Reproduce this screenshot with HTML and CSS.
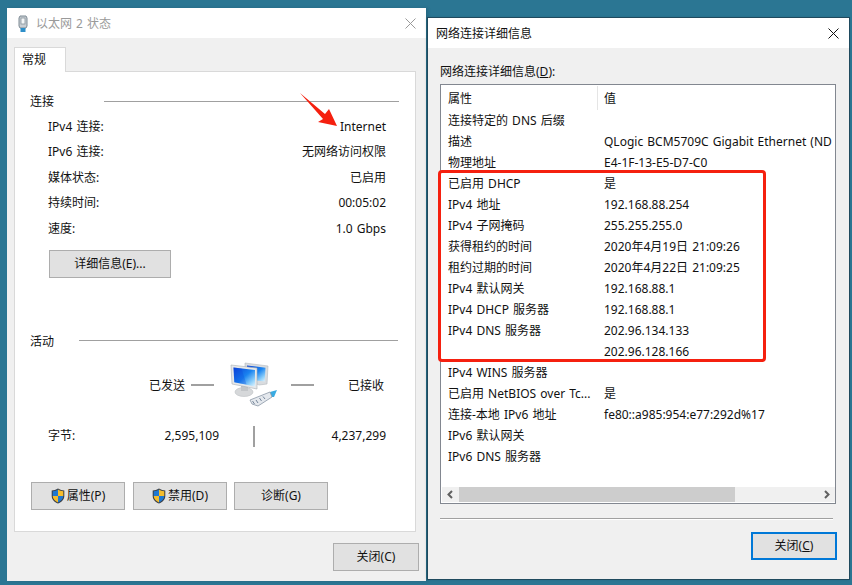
FILE: index.html
```html
<!DOCTYPE html>
<html lang="zh-CN">
<head>
<meta charset="utf-8">
<title>网络连接详细信息</title>
<link rel="stylesheet" href="styles.css">
</head>
<body>
<svg class="defs" width="0" height="0" aria-hidden="true">
  <defs>
    <symbol id="shield" viewBox="0 0 14 16">
      <path d="M7 .5C5 1.8 3 2.3 .7 2.4V8c0 3.6 2.6 6 6.3 7.6 3.700-1.600 6.300-4 6.300-7.600V2.400C11 2.300 9 1.800 7 .5Z" fill="#3b3f46"/>
      <path d="M7 1.600V8H1.700V3.300C3.700 3.200 5.400 2.700 7 1.600Z" fill="#1f78d1"/>
      <path d="M7 1.600C8.600 2.700 10.300 3.200 12.300 3.300V8H7Z" fill="#f5bd2c"/>
      <path d="M1.700 8H7v6.400C3.900 13 1.800 11 1.700 8Z" fill="#f5bd2c"/>
      <path d="M7 8h5.300c-.1 3-2.200 5-5.300 6.400Z" fill="#1f78d1"/>
    </symbol>
    <linearGradient id="scr" x1="0" y1="0" x2="1" y2="1">
      <stop offset="0" stop-color="#0a3fd8"/>
      <stop offset=".5" stop-color="#1a84f0"/>
      <stop offset=".8" stop-color="#8fd0fa"/>
      <stop offset="1" stop-color="#e4f5fe"/>
    </linearGradient>
  </defs>
</svg>

<section class="window win-status">
  <header class="titlebar">
    <svg class="plug" viewBox="0 0 10 17" aria-hidden="true">
      <path d="M2 1h6l1 2v8l-1 2H2L1 11V3Z" fill="#c9ced3" stroke="#7d8a94"/>
      <rect x="3" y="3" width="4" height="6" fill="#f4f6f7" stroke="#87939c" stroke-width=".8"/>
      <rect x="2.500" y="13" width="5" height="4" fill="#2e8fc9"/>
    </svg>
    <span class="title title-dim">以太网 2 状态</span>
    <svg class="close close-dim" viewBox="0 0 11 11" aria-hidden="true"><path d="M.5.500l10 10M10.500.500l-10 10"/></svg>
  </header>
  <div class="win-body">
    <div class="tabs"><span class="tab">常规</span></div>
    <div class="panel">
      <div class="group-head"><span class="txt">连接</span><i class="rule rule-conn"></i></div>
      <dl class="rows">
        <div class="row"><dt>IPv4 连接:</dt><dd>Internet</dd></div>
        <div class="row"><dt>IPv6 连接:</dt><dd>无网络访问权限</dd></div>
        <div class="row"><dt>媒体状态:</dt><dd>已启用</dd></div>
        <div class="row"><dt>持续时间:</dt><dd>00:05:02</dd></div>
        <div class="row"><dt>速度:</dt><dd>1.0 Gbps</dd></div>
      </dl>
      <button class="btn btn-detail">详细信息(E)...</button>
      <div class="group-head group-activity"><span class="txt">活动</span><i class="rule rule-act"></i></div>
      <div class="traffic">
        <span class="t-label txt">已发送</span>
        <i class="dash"></i>
        <svg class="net" viewBox="0 0 48 46" aria-hidden="true">
          <path d="M15 1l23 3-1 18-8 1-14-6Z" fill="#d9dcdf" stroke="#b3b8bd" stroke-width=".6"/>
          <path d="M17 3.500l18.500 2.300-.8 13.700-17.700-2Z" fill="url(#scr)"/>
          <ellipse cx="14" cy="30" rx="9" ry="4.500" fill="#d6d8da" stroke="#bcbfc2" stroke-width=".6"/>
          <path d="M11 24h7v5h-7Z" fill="#c3c6c9"/>
          <path d="M1 3l26 3v21L2 22Z" fill="#e6e8ea" stroke="#a8aeb4" stroke-width=".6"/>
          <path d="M3.500 5.500l21.500 2.500v16.500L4.300 20.300Z" fill="url(#scr)"/>
          <path d="M3.500 5.500l8 .9 5 16.200-12.200-2.300Z" fill="#0d49dc" opacity=".3"/>
          <path d="M40 30l7-2-3 7-4 0Z" fill="#39abe2"/>
          <path d="M20 38l20-8 2 5-14 9-6-2Z" fill="#e4e8ed" stroke="#8a97a6" stroke-width=".8"/>
          <path d="M22.500 39l2 3M26 38l2 3M29.500 36l2 3M33 34.500l2 2.500" stroke="#76869a" stroke-width="1" fill="none"/>
        </svg>
        <i class="dash dash-right"></i>
        <span class="t-label t-recv txt">已接收</span>
      </div>
      <div class="bytes">
        <span class="b-label">字节:</span>
        <span class="b-sent">2,595,109</span>
        <i class="b-bar"></i>
        <span class="b-recv">4,237,299</span>
      </div>
      <div class="actions">
        <button class="btn btn-act"><svg class="shield"><use href="#shield"/></svg>属性(P)</button>
        <button class="btn btn-act"><svg class="shield"><use href="#shield"/></svg>禁用(D)</button>
        <button class="btn btn-act btn-tight">诊断(G)</button>
      </div>
    </div>
    <div class="foot"><button class="btn btn-close">关闭(C)</button></div>
  </div>
</section>

<section class="window win-detail">
  <header class="titlebar">
    <span class="title title-detail">网络连接详细信息</span>
    <svg class="close" viewBox="0 0 11 11" aria-hidden="true"><path d="M.5.500l10 10M10.500.500l-10 10"/></svg>
  </header>
  <div class="detail-body">
    <div class="list-label">网络连接详细信息(<u>D</u>):</div>
    <div class="listbox">
      <div class="list-head"><span class="lh-a">属性</span><span class="lh-b">值</span></div>
      <div class="list-rows">
        <div class="lrow"><span>连接特定的 DNS 后缀</span><span></span></div>
        <div class="lrow"><span>描述</span><span>QLogic BCM5709C Gigabit Ethernet (ND</span></div>
        <div class="lrow"><span>物理地址</span><span>E4-1F-13-E5-D7-C0</span></div>
        <div class="lrow"><span>已启用 DHCP</span><span>是</span></div>
        <div class="lrow"><span>IPv4 地址</span><span>192.168.88.254</span></div>
        <div class="lrow"><span>IPv4 子网掩码</span><span>255.255.255.0</span></div>
        <div class="lrow"><span>获得租约的时间</span><span>2020年4月19日 21:09:26</span></div>
        <div class="lrow"><span>租约过期的时间</span><span>2020年4月22日 21:09:25</span></div>
        <div class="lrow"><span>IPv4 默认网关</span><span>192.168.88.1</span></div>
        <div class="lrow"><span>IPv4 DHCP 服务器</span><span>192.168.88.1</span></div>
        <div class="lrow"><span>IPv4 DNS 服务器</span><span>202.96.134.133</span></div>
        <div class="lrow"><span></span><span>202.96.128.166</span></div>
        <div class="lrow"><span>IPv4 WINS 服务器</span><span></span></div>
        <div class="lrow"><span>已启用 NetBIOS over Tc...</span><span>是</span></div>
        <div class="lrow"><span>连接-本地 IPv6 地址</span><span>fe80::a985:954:e77:292d%17</span></div>
        <div class="lrow"><span>IPv6 默认网关</span><span></span></div>
        <div class="lrow"><span>IPv6 DNS 服务器</span><span></span></div>
      </div>
      <div class="hscroll">
        <svg class="sb-arrow" viewBox="0 0 17 15" aria-hidden="true"><path d="M10 4l-3.500 3.500L10 11"/></svg>
        <div class="sb-track"><div class="sb-thumb"></div></div>
        <svg class="sb-arrow" viewBox="0 0 17 15" aria-hidden="true"><path d="M7 4l3.500 3.500L7 11"/></svg>
      </div>
    </div>
    <div class="sep"></div>
    <div class="foot-detail"><button class="btn btn-primary">关闭(<u>C</u>)</button></div>
  </div>
</section>

<div class="highlight"></div>
<svg class="arrow" viewBox="0 0 40 36" aria-hidden="true">
  <path d="M0 0L25 21 29 16 37 33 18 29 23 26Z" fill="#f5200f"/>
</svg>
</body>
</html>
```

FILE: styles.css
```css
* { box-sizing: border-box; }
html, body { margin: 0; padding: 0; }
body {
  position: relative;
  width: 852px;
  height: 585px;
  overflow: hidden;
  background: #2b7693;
  font-family: "Noto Sans", "Noto Sans CJK SC", sans-serif;
  font-size: 12px;
  line-height: 16px;
  word-spacing: 1px;
  color: #111;
}
.defs { position: absolute; }
.window {
  position: absolute;
  background: #f0f0f0;
  display: flex;
  flex-direction: column;
}
.win-status { left: 7px; top: 8px; width: 419px; height: 573px; box-shadow: 2px 0 3px rgba(0,0,0,.12); }
.win-detail { left: 428px; top: 18px; width: 421px; height: 561px; box-shadow: 0 0 0 1px #1f4a5e, -1px 0 3px rgba(0,0,0,.2); }
.titlebar {
  flex: none;
  height: 30px;
  background: #fff;
  display: flex;
  align-items: center;
}
.plug { width: 10px; height: 17px; margin-left: 11px; }
.title { flex: 1; padding-top: 2px; }
.title-dim { color: #9a9a9a; margin-left: 8px; }
.title-detail { margin-left: 8px; }
.close { width: 11px; height: 11px; margin-right: 10px; fill: none; stroke: #111; stroke-width: 1; }
.close-dim { stroke: #999; }

.win-body { flex: 1; padding: 9px 7px 0 7px; display: flex; flex-direction: column; }
.tabs { display: flex; height: 25px; position: relative; z-index: 1; }
.tab {
  width: 52px;
  height: 25px;
  background: #fff;
  border: 1px solid #d9d9d9;
  border-bottom: 0;
  padding: 4px 0 0 7px;
}
.panel {
  margin-top: -1px;
  width: 402px;
  height: 461px;
  background: #fff;
  border: 1px solid #d9d9d9;
  padding: 19px 17px 0 15px;
}
.txt { padding-top: 2px; }
.group-head { display: flex; align-items: center; height: 20px; }
.rule { flex: 1; height: 1px; background: #a0a0a0; }
.rule-conn { margin-left: 50px; margin-right: -1px; }
.rule-act { margin-left: 25px; }
.group-activity { margin-top: 53px; }
.rows { margin: 2px 0 0; padding: 0 12px 0 18px; }
.row { display: flex; justify-content: space-between; align-items: center; height: 25.500px; }
.row dt, .row dd { margin: 0; padding-top: 2px; }
.btn {
  font: inherit;
  color: inherit;
  background: #e1e1e1;
  border: 1px solid #adadad;
  border-radius: 0;
  padding: 0;
  display: flex;
  align-items: center;
  justify-content: center;
}
.btn-detail { width: 122px; height: 28px; margin: 9px 0 0 19px; }
.traffic { display: flex; align-items: center; height: 46px; margin-top: 11px; padding-left: 119px; }
.t-label { width: 36px; white-space: nowrap; }
.dash { width: 23px; height: 2px; background: #a0a0a0; margin-left: 6px; }
.net { width: 48px; height: 46px; margin-left: 16px; }
.dash-right { margin-left: 13px; }
.t-recv { margin-left: 34px; }
.bytes { display: flex; align-items: center; height: 21px; margin-top: 18px; padding-left: 18px; }
.b-label { width: 70px; }
.b-sent { width: 101px; text-align: right; }
.b-bar { width: 2px; height: 21px; background: #a0a0a0; margin-left: 34px; }
.b-recv { width: 131px; text-align: right; }
.actions { display: flex; gap: 8px; margin: 35px 0 0 1px; }
.btn-act { width: 94px; height: 28px; }
.btn-tight { margin-left: -1px; }
.shield { width: 14px; height: 16px; margin-right: 2px; }
.foot { display: flex; justify-content: flex-end; margin-top: 11px; }
.btn-close { width: 86px; height: 28px; }

.detail-body { flex: 1; padding: 15px 13px 0 12px; display: flex; flex-direction: column; }
.list-label { height: 16px; padding-top: 1px; line-height: 16px; }
.listbox {
  margin-top: 5px;
  width: 396px;
  height: 420px;
  background: #fff;
  border: 1px solid #828790;
  display: flex;
  flex-direction: column;
}
.list-head { flex: none; display: flex; align-items: center; height: 25px; padding-left: 7px; }
.lh-a { width: 150px; height: 24px; line-height: 26px; border-right: 1px solid #e5e5e5; }
.lh-b { padding: 2px 0 0 6px; }
.list-rows { flex: 1; overflow: hidden; }
.lrow {
  display: grid;
  grid-template-columns: 156px 1fr;
  height: 21px;
  line-height: 22px;
  padding-left: 7px;
  white-space: nowrap;
  overflow: hidden;
}
.hscroll { flex: none; display: flex; height: 15px; margin: 0 0 1px 1px; background: #f0f0f0; }
.sb-arrow { width: 17px; height: 15px; fill: none; stroke: #606060; stroke-width: 2; }
.sb-track { flex: 1; }
.sb-thumb { width: 276px; height: 15px; background: #cdcdcd; }
.sep { margin-top: 14px; height: 2px; border-top: 1px solid #a0a0a0; border-bottom: 1px solid #fff; width: 393px; }
.foot-detail { display: flex; justify-content: flex-end; margin-top: 12px; margin-right: -1px; }
.btn-primary { width: 86px; height: 28px; border: 2px solid #0078d7; }

.highlight {
  position: absolute;
  left: 438px;
  top: 170px;
  width: 328px;
  height: 192px;
  border: 3px solid #f5200f;
  border-radius: 4px;
}
.arrow { position: absolute; left: 300px; top: 93px; width: 40px; height: 36px; }
```
